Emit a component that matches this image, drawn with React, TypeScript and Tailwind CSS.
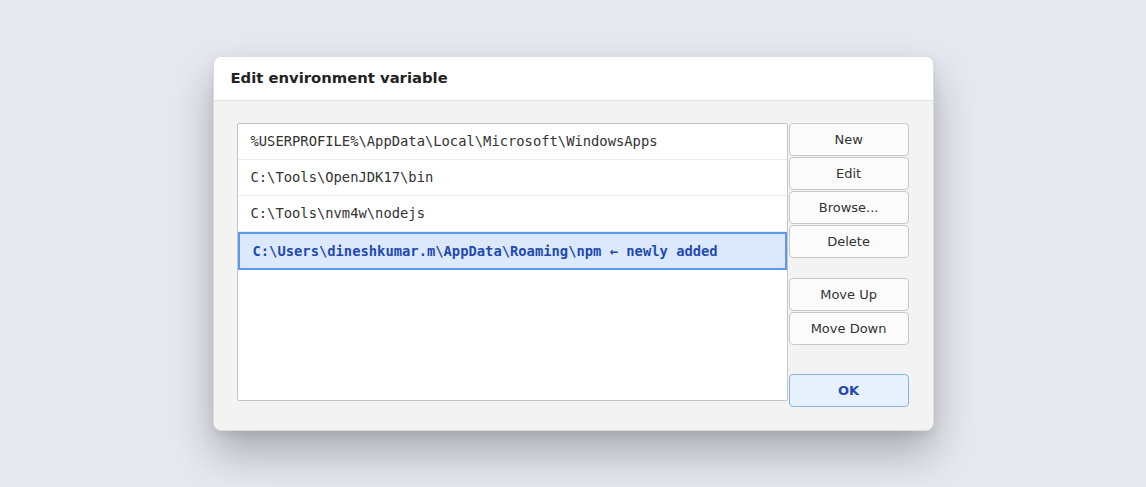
import React from "react";

const rows = [
  "%USERPROFILE%\\AppData\\Local\\Microsoft\\WindowsApps",
  "C:\\Tools\\OpenJDK17\\bin",
  "C:\\Tools\\nvm4w\\nodejs",
];

function Btn({ children }: { children: React.ReactNode }) {
  return (
    <button className="h-[33px] w-full rounded-[4px] border border-[#c8c8c8] bg-[#fbfbfb] text-[13px] text-[#333] [font-family:'DejaVu_Sans',sans-serif]">
      {children}
    </button>
  );
}

export default function App() {
  return (
    <div className="flex h-[487px] w-full items-center justify-center bg-[#e6e9ef]">
      <div className="w-[721px] overflow-hidden rounded-[8px] border border-[#dcdcdc] bg-[#f3f3f3] shadow-[0_22px_44px_rgba(0,0,0,0.27),0_4px_10px_rgba(0,0,0,0.07)]">
        <div className="flex h-[44px] items-center border-b border-[#e2e2e2] bg-white pl-[17px] text-[14.8px] font-bold text-[#222] [font-family:'DejaVu_Sans',sans-serif]">
          Edit environment variable
        </div>
        <div className="flex gap-[1px] pl-[23px] pr-[24px] pt-[22px] pb-[23px]">
          <div className="h-[278px] w-[552px] rounded-[2px] border border-[#c6c6c6] bg-white [font-family:'DejaVu_Sans_Mono',monospace] text-[13.8px]">
            {rows.map((r) => (
              <div
                key={r}
                className="flex h-[36px] items-center border-b border-[#ececec] pl-[13px] text-[#333]"
              >
                {r}
              </div>
            ))}
            <div className="flex h-[38px] items-center border-2 border-[#5a9aee] bg-[#dce9fd] pl-[13px] font-bold text-[#1f4ab0]">
              C:\Users\dineshkumar.m\AppData\Roaming\npm ← newly added
            </div>
          </div>
          <div className="flex w-[120px] flex-col">
            <div className="flex flex-col gap-[1px]">
              <Btn>New</Btn>
              <Btn>Edit</Btn>
              <Btn>Browse...</Btn>
              <Btn>Delete</Btn>
            </div>
            <div className="mt-[20px] flex flex-col gap-[1px]">
              <Btn>Move Up</Btn>
              <Btn>Move Down</Btn>
            </div>
            <button className="mt-[29px] h-[33px] w-full rounded-[4px] border border-[#8ab2ea] bg-[#e7f0fd] text-[13px] font-bold text-[#1f4ab0] [font-family:'DejaVu_Sans',sans-serif]">
              OK
            </button>
          </div>
        </div>
      </div>
    </div>
  );
}
